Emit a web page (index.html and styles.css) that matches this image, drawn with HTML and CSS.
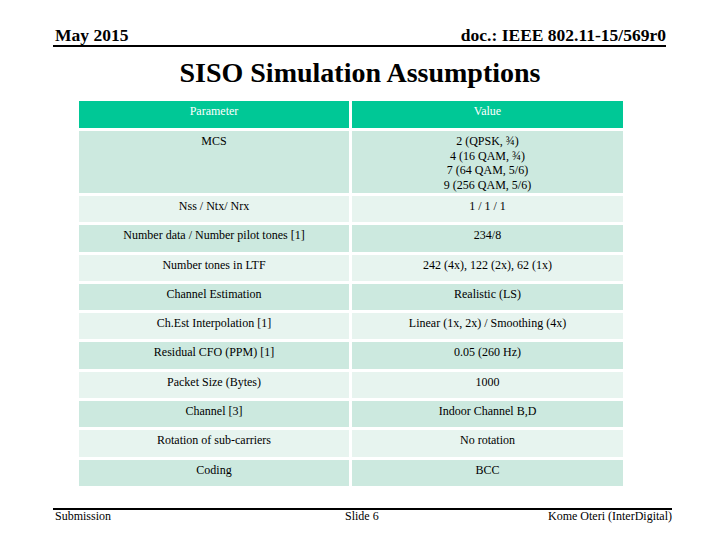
FILE: index.html
```html
<!DOCTYPE html>
<html>
<head>
<meta charset="utf-8">
<link rel="stylesheet" href="styles.css">
</head>
<body>
<div class="slide">
  <header class="top">
    <span>May 2015</span>
    <span>doc.: IEEE 802.11-15/569r0</span>
  </header>
  <h1 class="title">SISO Simulation Assumptions</h1>
  <table class="params">
    <thead>
      <tr><th>Parameter</th><th>Value</th></tr>
    </thead>
    <tbody>
      <tr class="dark tall"><td>MCS</td><td>2 (QPSK, ¾)<br>4 (16 QAM, ¾)<br>7 (64 QAM, 5/6)<br>9 (256 QAM, 5/6)</td></tr>
      <tr class="light"><td>Nss / Ntx/ Nrx</td><td>1 / 1 / 1</td></tr>
      <tr class="dark"><td>Number data / Number pilot tones [1]</td><td>234/8</td></tr>
      <tr class="light"><td>Number tones in LTF</td><td>242 (4x), 122 (2x), 62 (1x)</td></tr>
      <tr class="dark"><td>Channel Estimation</td><td>Realistic (LS)</td></tr>
      <tr class="light"><td>Ch.Est Interpolation [1]</td><td>Linear (1x, 2x) / Smoothing (4x)</td></tr>
      <tr class="dark"><td>Residual CFO (PPM) [1]</td><td>0.05 (260 Hz)</td></tr>
      <tr class="light"><td>Packet Size (Bytes)</td><td>1000</td></tr>
      <tr class="dark"><td>Channel [3]</td><td>Indoor Channel B,D</td></tr>
      <tr class="light"><td>Rotation of sub-carriers</td><td>No rotation</td></tr>
      <tr class="dark"><td>Coding</td><td>BCC</td></tr>
    </tbody>
  </table>
  <footer class="bottom">
    <span class="f-left">Submission</span>
    <span class="f-mid">Slide 6</span>
    <span class="f-right">Kome Oteri (InterDigital)</span>
  </footer>
</div>
</body>
</html>
```

FILE: styles.css
```css
html, body {
  margin: 0;
  padding: 0;
  background: #ffffff;
}
.slide {
  width: 720px;
  height: 540px;
  position: relative;
  font-family: "Liberation Serif", "Times New Roman", serif;
  color: #000;
  overflow: hidden;
}
.top {
  display: flex;
  justify-content: space-between;
  align-items: flex-end;
  margin: 0 54px 0 53px;
  height: 47px;
  border-bottom: 2px solid #000;
  font-weight: bold;
  font-size: 17.5px;
  line-height: 17px;
  box-sizing: border-box;
  padding-bottom: 1px;
}
.top span { padding-left: 2px; }
.title {
  margin: 10px 0 0 0;
  text-align: center;
  font-family: "Liberation Serif", "Times New Roman", serif;
  font-size: 28px;
  line-height: 32px;
  font-weight: bold;
}
.params {
  margin: 9px 0 0 76px;
  width: 550px;
  border-collapse: separate;
  border-spacing: 3px;
  table-layout: fixed;
  font-family: "Liberation Serif", "Times New Roman", serif;
  font-size: 12px;
  line-height: 14.5px;
}
.params th, .params td {
  text-align: center;
  vertical-align: top;
  padding: 3px 4px 0 4px;
  height: 26.3px;
  box-sizing: border-box;
}
.params th {
  background: #00c896;
  color: #ffffff;
  font-weight: normal;
  height: 27px;
}
.params th:first-child, .params td:first-child { width: 270px; }
.params tr.tall td { height: 62px; }
.params tr.dark td { background: #cce9df; }
.params tr.light td { background: #e7f4ef; }
.bottom {
  position: absolute;
  left: 53px;
  right: 48px;
  top: 508px;
  border-top: 2px solid #000;
  display: flex;
  justify-content: space-between;
  font-family: "Liberation Serif", "Times New Roman", serif;
  font-size: 12px;
  line-height: 11px;
  padding-top: 1px;
}
.f-left { padding-left: 2px; }
.f-mid { position: absolute; left: 292px; }
```
